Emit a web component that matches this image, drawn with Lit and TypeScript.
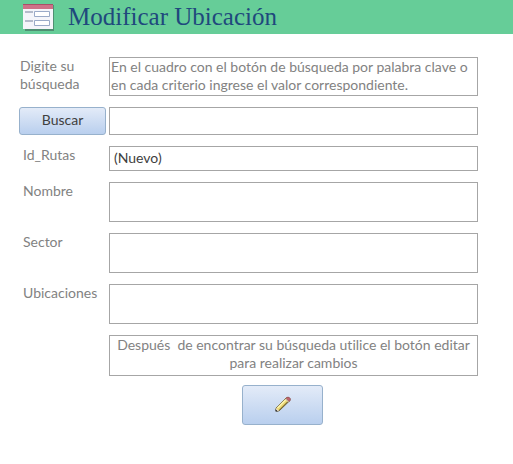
import { LitElement, html, css } from "lit";
import { customElement } from "lit/decorators.js";

@customElement("app-root")
export class AppRoot extends LitElement {
  static styles = css`
    :host {
      display: block;
      min-height: 100vh;
      background: #fff;
      color: #828282;
      font: 14px/18px Lato, Carlito, sans-serif;
      font-variant-ligatures: none;
    }
    .header {
      display: flex;
      align-items: center;
      gap: 12px;
      height: 34px;
      padding-left: 22px;
      background: #66cd98;
    }
    .title {
      margin: 0;
      color: #1f497d;
      font: 25px/32px "Liberation Serif", serif;
    }
    .form {
      display: grid;
      grid-template-columns: 87px 1fr;
      column-gap: 3px;
      row-gap: 11px;
      padding: 23px 35px 24px 19px;
    }
    .label {
      padding-left: 4px;
    }
    .hint {
      padding-left: 1px;
    }
    .box {
      box-sizing: border-box;
      width: 100%;
      margin: 0;
      border: 1px solid #a6a6a6;
      border-radius: 0;
      background: #fff;
      font: inherit;
      display: block;
    }
    .note {
      padding: 0 1px;
      min-height: 39px;
    }
    .closing {
      grid-column: 2;
      min-height: 41px;
      text-align: center;
      white-space: pre-wrap;
    }
    .field {
      padding: 0 4px;
      color: #404040;
    }
    .search {
      height: 28px;
    }
    .id {
      height: 25px;
      padding-bottom: 2px;
    }
    .area {
      height: 40px;
      resize: none;
    }
    .button {
      display: flex;
      align-items: center;
      justify-content: center;
      padding: 0 0 2px;
      border: 1px solid #97b1cc;
      border-radius: 3px;
      background: linear-gradient(#e3ebf8, #b9cfee);
      color: #404040;
      font: inherit;
    }
    .edit {
      grid-column: 2;
      justify-self: center;
      width: 81px;
      height: 40px;
      margin-top: -2px;
      margin-right: 22px;
    }
  `;

  render() {
    return html`
      <header class="header">
        <svg width="34" height="32" viewBox="0 0 34 32" aria-hidden="true">
          <path d="M3 4h29v26H3z" fill="#4f8f72" />
          <path d="M1 3h30v25H1z" fill="#f4f5fa" />
          <path d="M1 3h30v5H1z" fill="#ce7188" />
          <path d="M1 3h30v1H1z" fill="#a94f68" />
          <path d="M3 10h8v2H3zM3 19h8v2H3z" fill="#b4bbcb" />
          <path d="M12.500 10.500h15v5h-15zM12.500 19.500h15v5h-15z" fill="#fff" stroke="#9aaac8" />
        </svg>
        <h1 class="title">Modificar Ubicación</h1>
      </header>
      <form class="form" @submit=${(e: Event) => e.preventDefault()}>
        <label class="hint" for="search">Digite su búsqueda</label>
        <p class="box note">En el cuadro con el botón de búsqueda por palabra clave o en cada criterio ingrese el valor correspondiente.</p>
        <button class="button" type="submit">Buscar</button>
        <input class="box field search" id="search" type="text" />
        <label class="label" for="id">Id_Rutas</label>
        <input class="box field id" id="id" type="text" value="(Nuevo)" readonly />
        <label class="label" for="name">Nombre</label>
        <textarea class="box field area" id="name"></textarea>
        <label class="label" for="sector">Sector</label>
        <textarea class="box field area" id="sector"></textarea>
        <label class="label" for="places">Ubicaciones</label>
        <textarea class="box field area" id="places"></textarea>
        <p class="box note closing">Después  de encontrar su búsqueda utilice el botón editar para realizar cambios</p>
        <button class="button edit" type="button" aria-label="Editar">
          <svg width="16" height="16" viewBox="0 0 16 16" aria-hidden="true">
            <path d="M1 15v-3L11.500 1.500h2l1.500 1v2L4 15z" fill="#ecd873" stroke="#6e6238" stroke-width="0.800" />
            <path d="M2.500 12L11 3.500" stroke="#fdf6b8" stroke-width="1.300" />
            <path d="M4 14.500L13 5.500" stroke="#5b4d22" />
            <path d="M1 15v-3l3 3z" fill="#f6e6cf" />
            <path d="M0.500 15.500v-2.500l2.500 2.500z" fill="#2b2b2b" />
            <path d="M11 2.500l1-1.200h2l1.200 1.200v2L14 5.500z" fill="#bf6470" stroke="#96505a" stroke-width="0.700" />
            <path d="M10.500 3l3 3" stroke="#c9c4bb" />
          </svg>
        </button>
      </form>
    `;
  }
}
